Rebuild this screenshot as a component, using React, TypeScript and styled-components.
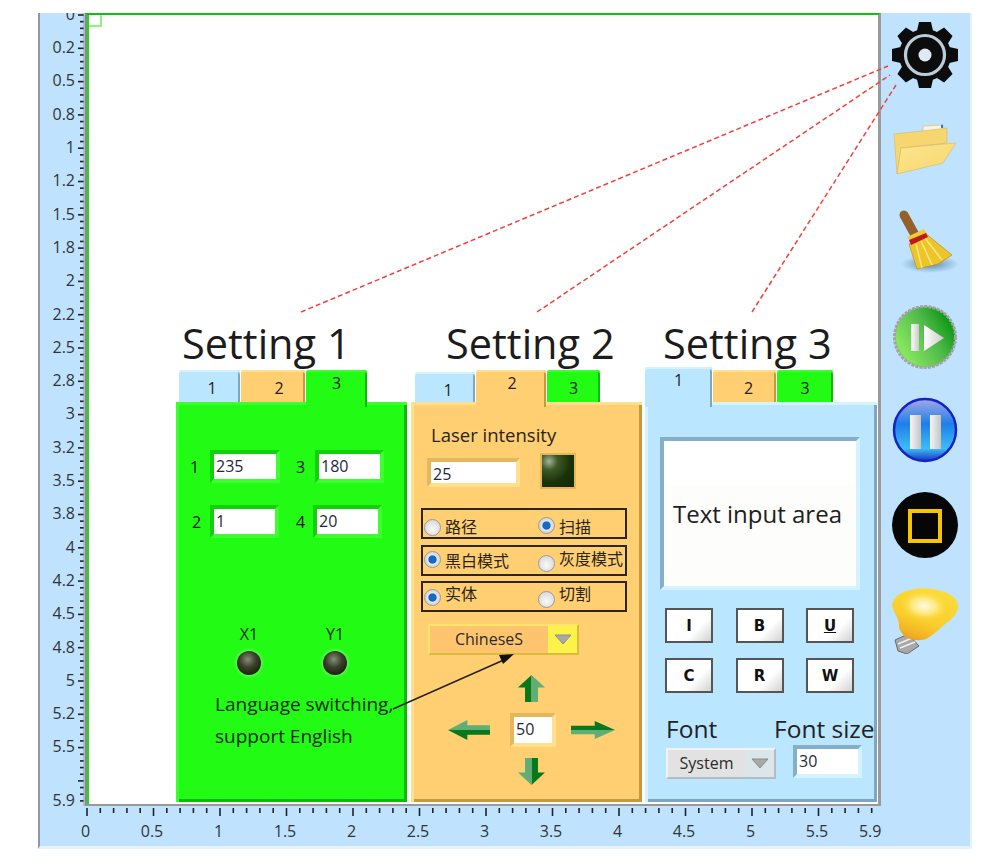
import React from "react";
import styled, { createGlobalStyle } from "styled-components";

type Tone = "green" | "orange" | "blue";

const tones: Record<Tone, { face: string; light: string; dark: string; well: string }> = {
  green: { face: "#22fb14", light: "#3dff30", dark: "#10b80a", well: "#13d00c" },
  orange: { face: "#ffcf72", light: "#ffe08e", dark: "#c6993e", well: "#e4b65e" },
  blue: { face: "#bbe6ff", light: "#d4f3ff", dark: "#7ea6bf", well: "#84aec9" },
};

const GlobalStyle = createGlobalStyle`
  html, body {
    margin: 0;
    background: #fff;
  }
  * {
    box-sizing: border-box;
  }
`;

const Page = styled.div`
  position: relative;
  width: 1000px;
  height: 868px;
  padding: 13px 0 0 38px;
  font-family: "Open Sans", "Noto Sans CJK SC", sans-serif;
  color: #222;
  overflow: hidden;
`;

const Overlay = styled.svg`
  position: absolute;
  top: 0;
  left: 0;
  pointer-events: none;
`;

const Window = styled.div`
  display: flex;
  width: 934px;
  height: 836px;
  background: #bfe3ff;
  border-left: 2px solid #8d9aa5;
  border-right: 2px solid #e6f3fc;
  border-bottom: 3px solid #e6f3fc;
`;

const Main = styled.div`
  display: flex;
  flex-direction: column;
  width: 841px;
`;

const TopRow = styled.div`
  display: flex;
  height: 793px;
`;

const RulerY = styled.div`
  display: flex;
  width: 45px;
  clip-path: inset(0 0 -30px 0);
`;

const LabelsY = styled.div`
  flex: 1;
  display: flex;
  flex-direction: column;
  margin-top: -15.15px;
  padding-right: 2px;
`;

const TickLabelY = styled.div<{ $extra?: number }>`
  flex: 0 0 33.3px;
  margin-top: ${p => p.$extra ?? 0}px;
  font-size: 16px;
  line-height: 33.3px;
  text-align: right;
  color: #333;
`;

const RulerX = styled.div`
  display: flex;
  flex-direction: column;
  padding-top: 2px;
`;

const LabelsX = styled.div`
  display: flex;
  margin-left: 12.25px;
`;

const TickLabelX = styled.div<{ $extra?: number }>`
  flex: 0 0 66.5px;
  margin-left: ${p => p.$extra ?? 0}px;
  font-size: 16px;
  line-height: 26px;
  text-align: center;
  color: #333;
`;

const Canvas = styled.div`
  position: relative;
  flex: 1;
  display: flex;
  align-items: flex-end;
  padding: 0 0 2px 85px;
  background: #fff;
  border-left: 2px solid #8a8a8a;
  border-right: 3px solid #9a9a9a;
  border-bottom: 2px solid #9a9a9a;
  border-top: 2px solid #12c012;
  box-shadow: inset 2px 0 0 #22d81a;
`;

const CornerMark = styled.div`
  position: absolute;
  top: 0;
  left: 2px;
  width: 13px;
  height: 12px;
  border-right: 2px solid #8cf57e;
  border-bottom: 2px solid #8cf57e;
`;

const Panel = styled.section<{ $width: number; $gap: number }>`
  display: flex;
  flex-direction: column;
  width: ${p => p.$width}px;
  margin-left: ${p => p.$gap}px;
`;

const Heading = styled.h2<{ $indent: number }>`
  height: 45px;
  margin: 0 0 3px;
  padding-left: ${p => p.$indent}px;
  font-size: 41.5px;
  font-weight: 400;
  line-height: 42px;
  color: #1c1c1c;
  white-space: nowrap;
`;

const Tabs = styled.div<{ $indent: number }>`
  display: flex;
  align-items: flex-end;
  gap: 1px;
  height: 32px;
  padding-left: ${p => p.$indent}px;
`;

const Tab = styled.div<{ $tone: Tone; $w: number; $h: number; $active?: boolean; $shift?: number }>`
  position: relative;
  z-index: ${p => (p.$active ? 1 : 0)};
  flex: 0 0 ${p => p.$w}px;
  height: ${p => p.$h}px;
  margin-bottom: ${p => (p.$active ? -5 : 0)}px;
  padding: ${p => (p.$active ? 2 : 7)}px 0 0 ${p => p.$shift ?? 0}px;
  font-size: 16px;
  line-height: 22px;
  text-align: center;
  background: ${p => tones[p.$tone].face};
  border-radius: 3px 3px 0 0;
  box-shadow:
    inset 0 2px 0 ${p => tones[p.$tone].light},
    inset -2px 0 0 ${p => tones[p.$tone].dark};
`;

const Body = styled.div<{ $tone: Tone }>`
  display: flex;
  flex-direction: column;
  height: 400px;
  background: ${p => tones[p.$tone].face};
  box-shadow:
    inset 3px 3px 0 ${p => tones[p.$tone].light},
    inset -3px -3px 0 ${p => tones[p.$tone].dark};
`;

const Well = styled.div<{ $tone: Tone; $w: number; $h: number }>`
  display: flex;
  flex: 0 0 ${p => p.$w}px;
  width: ${p => p.$w}px;
  height: ${p => p.$h}px;
  background: #fff;
  border: 4px solid;
  border-color: ${p => `${tones[p.$tone].well} ${tones[p.$tone].light} ${tones[p.$tone].light} ${tones[p.$tone].well}`};
`;

const WellText = styled.span`
  padding-left: 2px;
  font-size: 16px;
  line-height: 24px;
  color: #1e2a3a;
`;

const FieldRow = styled.div<{ $top: number; $left: number }>`
  display: flex;
  align-items: center;
  margin-top: ${p => p.$top}px;
  padding-left: ${p => p.$left}px;
`;

const FieldLabel = styled.span<{ $w: number; $before?: number }>`
  flex: 0 0 ${p => p.$w}px;
  margin-left: ${p => p.$before ?? 0}px;
  font-size: 16px;
  color: #111;
`;

const LedRow = styled.div`
  display: flex;
  margin: 85px 0 0 30px;
`;

const LedColumn = styled.div`
  display: flex;
  flex-direction: column;
  align-items: center;
  width: 86px;
  font-size: 16px;
  line-height: 22px;
  color: #0b2a0b;
`;

const RoundLed = styled.div`
  width: 24px;
  height: 24px;
  margin-top: 6px;
  border-radius: 50%;
  background: radial-gradient(circle at 45% 35%, #878d78 0, #3a4029 40%, #1e2312 75%);
  box-shadow: 0 0 3px 1px #7df07a;
`;

const Note = styled.p`
  margin: 13px 0 0 39px;
  font-size: 19px;
  line-height: 32px;
  color: #0b2a0b;
  white-space: nowrap;
`;

const LaserLabel = styled.div`
  margin: 21px 0 0 20px;
  font-size: 18.5px;
  line-height: 24px;
  color: #2b2416;
`;

const LaserRow = styled.div`
  display: flex;
  height: 29px;
  margin: 11px 0 0 16px;
`;

const SquareLed = styled.div`
  width: 36px;
  height: 36px;
  margin: -5px 0 0 20px;
  background: radial-gradient(circle at 22% 20%, #a9b29a 0, #3e5a26 24%, #183208 60%, #112607 100%);
  border: 2px solid #e4b65e;
`;

const RadioGroup = styled.div<{ $top: number }>`
  display: grid;
  grid-template-columns: 114px 1fr;
  width: 206px;
  height: 31px;
  margin: ${p => p.$top}px 0 0 10px;
  padding-left: 1px;
  border: 2px solid #2c2618;
`;

const RadioItem = styled.label`
  display: flex;
  align-items: flex-start;
  gap: 4px;
  font-size: 16px;
  line-height: 20px;
  color: #2a2415;
  white-space: nowrap;
`;

const RadioDot = styled.span<{ $on?: boolean; $dy: number }>`
  flex: 0 0 17px;
  height: 17px;
  margin-top: ${p => p.$dy}px;
  border-radius: 50%;
  border: 1px solid #9a9a9a;
  background: ${p =>
    p.$on
      ? "radial-gradient(circle, #1668c8 0, #1668c8 34%, #e8e8e8 44%, #bdbdbd 100%)"
      : "radial-gradient(circle at 50% 60%, #fafafa 0, #cfcfcf 100%)"};
`;

const RadioText = styled.span<{ $dy: number }>`
  margin-top: ${p => p.$dy}px;
`;

const Dropdown = styled.div<{ $w: number; $face: string; $button: string; $edge: string; $shade: string }>`
  display: flex;
  width: ${p => p.$w}px;
  height: 31px;
  background: ${p => p.$face};
  border: 2px solid;
  border-color: ${p => `${p.$edge} ${p.$shade} ${p.$shade} ${p.$edge}`};
  span:first-child {
    flex: 1;
    font-size: 16px;
    line-height: 27px;
    text-align: center;
    color: #2b2b2b;
  }
  span:last-child {
    display: flex;
    align-items: center;
    justify-content: center;
    flex: 0 0 29px;
    background: ${p => p.$button};
  }
`;

const DropdownSlot = styled.div<{ $top: number; $left: number }>`
  flex: none;
  margin: ${p => p.$top}px 0 0 ${p => p.$left}px;
`;

const Pad = styled.div`
  display: grid;
  grid-template-columns: 62px 46px 59px;
  grid-template-rows: 27px 34px 27px;
  row-gap: 11px;
  justify-items: center;
  align-items: center;
  margin: 20px 0 0 37px;
`;

const PadCell = styled.div<{ $col: number; $row: number; $align?: string; $nudge?: number }>`
  grid-column: ${p => p.$col};
  grid-row: ${p => p.$row};
  justify-self: ${p => p.$align ?? "center"};
  margin-right: ${p => p.$nudge ?? 0}px;
  display: flex;
`;

const TextAreaWell = styled.div`
  display: flex;
  align-items: center;
  height: 153px;
  width: 200px;
  margin: 35px 0 0 15px;
  padding: 0 0 0 9px;
  background: linear-gradient(#fff 0, #fff 30%, #fdfdfb 31%, #fdfdfb 100%);
  border: 4px solid;
  border-color: #84aec9 #d4f3ff #d4f3ff #84aec9;
  font-size: 24px;
  color: #202020;
  white-space: nowrap;
`;

const ButtonGrid = styled.div`
  display: grid;
  grid-template-columns: repeat(3, 48px);
  grid-template-rows: 35px 35px;
  column-gap: 22.5px;
  row-gap: 15px;
  margin: 18px 0 0 20px;
`;

const StyleButton = styled.button<{ $underline?: boolean }>`
  padding: 0;
  font-family: "DejaVu Sans", sans-serif;
  font-size: 15px;
  font-weight: 700;
  color: #111;
  text-decoration: ${p => (p.$underline ? "underline" : "none")};
  background: linear-gradient(135deg, #fff 0, #fff 65%, #d2d2d2 100%);
  border: 2px solid #555;
  border-radius: 0;
`;

const FontLabels = styled.div`
  display: flex;
  margin: 20px 0 0 21px;
  font-size: 24.5px;
  line-height: 32px;
  color: #222;
  white-space: nowrap;
  span:first-child {
    flex: 0 0 108px;
  }
`;

const FontControls = styled.div`
  display: flex;
  align-items: flex-start;
  gap: 17px;
  padding-left: 21px;
`;

const Sidebar = styled.aside`
  display: flex;
  flex-direction: column;
  align-items: center;
  flex: 1;
  padding: 9px 1px 0 0;
`;

const IconSlot = styled.div<{ $gap: number }>`
  display: flex;
  width: 66px;
  height: 66px;
  margin-top: ${p => p.$gap}px;
`;

const Triangle = () => (
  <svg width="18" height="11" viewBox="0 0 18 11">
    <polygon points="1,1 17,1 9,10" fill="#a8a8a8" stroke="#8e8e8e" />
  </svg>
);

// one arrow drawn along its axis, half dark and half light
const Arrow = ({ dir, len, wide }: { dir: "up" | "down" | "left" | "right"; len: number; wide: number }) => {
  const head = len * 0.46;
  const shaft = wide * 0.24;
  const mid = wide / 2;
  const at = (side: number, along: number) => {
    if (dir === "up") return `${mid + side},${along}`;
    if (dir === "down") return `${mid - side},${len - along}`;
    if (dir === "left") return `${along},${mid - side}`;
    return `${len - along},${mid + side}`;
  };
  const half = (s: number) =>
    [at(0, 0), at(s * mid, head), at(s * shaft, head), at(s * shaft, len), at(0, len)].join(" ");
  const horizontal = dir === "left" || dir === "right";
  return (
    <svg width={horizontal ? len : wide} height={horizontal ? wide : len}>
      <polygon points={half(-1)} fill="#07781c" />
      <polygon points={half(1)} fill="#5fae78" />
    </svg>
  );
};

const GearIcon = () => (
  <svg width="66" height="66" viewBox="0 0 66 66">
    {[0, 45, 90, 135, 180, 225, 270, 315].map(a => (
      <polygon key={a} points="27,0 39,0 42,13 24,13" fill="#0c0c0c" transform={`rotate(${a} 33 33)`} />
    ))}
    <circle cx="33" cy="33" r="26" fill="#0c0c0c" />
    <circle cx="33" cy="33" r="19.5" fill="none" stroke="#bccdd9" strokeWidth="3.2" />
    <circle cx="33" cy="33" r="6.5" fill="#dfe9f1" />
  </svg>
);

const FolderIcon = () => (
  <svg width="66" height="66" viewBox="0 0 66 66">
    <defs>
      <linearGradient id="folderFront" x1="0" y1="0" x2="1" y2="1">
        <stop offset="0" stopColor="#fde68f" />
        <stop offset="1" stopColor="#f7d56c" />
      </linearGradient>
    </defs>
    <polygon points="31,9 51,8 52,18 31,20" fill="#f7f4e4" stroke="#dcb858" strokeWidth="0.6" />
    <polygon points="49,8 51,7.5 51,11 49,11" fill="#2b7fc4" />
    <polygon points="2,17 30,14 55,11 55,26 9,31 5,57" fill="#f6d671" stroke="#d6b04e" strokeWidth="0.5" />
    <polygon points="9,31 64,26 51,46 5,57" fill="url(#folderFront)" stroke="#d6b04e" strokeWidth="0.5" />
  </svg>
);

const BroomIcon = () => (
  <svg width="66" height="66" viewBox="0 0 66 66">
    <defs>
      <radialGradient id="broomShadow">
        <stop offset="0" stopColor="#5f8aa8" />
        <stop offset="1" stopColor="#bfe3ff" />
      </radialGradient>
    </defs>
    <ellipse cx="38" cy="56" rx="29" ry="9" fill="url(#broomShadow)" />
    <line x1="12" y1="7" x2="23" y2="27" stroke="#95602a" strokeWidth="9" strokeLinecap="round" />
    <polygon points="17,36 33,25 60,47 46,56 25,61" fill="#ecc52c" stroke="#b8921a" strokeWidth="0.7" />
    <path d="M24 36 L30 60 M29 33 L40 57 M33 30 L50 52" stroke="#fbe67a" strokeWidth="1.5" fill="none" />
    <polygon points="15,29 32,21 35,26 18,33" fill="#efcb3a" />
    <polygon points="17,32 34,25 36,29 19,37" fill="#c01818" />
  </svg>
);

const PlayIcon = () => (
  <svg width="66" height="66" viewBox="0 0 66 66">
    <defs>
      <linearGradient id="playFill" x1="0.05" y1="0.55" x2="0.8" y2="0.1">
        <stop offset="0" stopColor="#84e65e" />
        <stop offset="0.6" stopColor="#4fb84a" />
        <stop offset="1" stopColor="#0f9a16" />
      </linearGradient>
      <linearGradient id="playBar" x1="0" y1="0" x2="1" y2="0">
        <stop offset="0" stopColor="#ffffff" />
        <stop offset="1" stopColor="#c9c9c9" />
      </linearGradient>
    </defs>
    <circle cx="33" cy="33" r="30.5" fill="url(#playFill)" stroke="#a3a3a3" strokeWidth="3" strokeDasharray="3 1.2" />
    <rect x="19" y="20" width="8" height="27" fill="url(#playBar)" />
    <polygon points="32,21 52,34 32,47" fill="url(#playBar)" />
  </svg>
);

const PauseIcon = () => (
  <svg width="66" height="66" viewBox="0 0 66 66">
    <defs>
      <linearGradient id="pauseFill" x1="0" y1="0" x2="0" y2="1">
        <stop offset="0" stopColor="#a4a8e6" />
        <stop offset="0.4" stopColor="#1f7ee8" />
        <stop offset="0.8" stopColor="#3cbdf6" />
        <stop offset="1" stopColor="#1830c0" />
      </linearGradient>
      <linearGradient id="pauseBar" x1="0" y1="0" x2="1" y2="0">
        <stop offset="0" stopColor="#f6f6f6" />
        <stop offset="1" stopColor="#c4c4c4" />
      </linearGradient>
    </defs>
    <circle cx="33" cy="33" r="31" fill="url(#pauseFill)" stroke="#1424c4" strokeWidth="2.5" />
    <rect x="18" y="18" width="11" height="34" fill="url(#pauseBar)" />
    <rect x="38" y="18" width="11" height="34" fill="url(#pauseBar)" />
  </svg>
);

const StopIcon = () => (
  <svg width="66" height="66" viewBox="0 0 66 66">
    <circle cx="33" cy="33" r="33" fill="#060606" />
    <rect x="18" y="19" width="30" height="30" fill="none" stroke="#f6c400" strokeWidth="4" />
  </svg>
);

const BulbIcon = () => (
  <svg width="66" height="66" viewBox="0 0 66 66">
    <defs>
      <linearGradient id="bulbFill" x1="0.7" y1="0" x2="0.25" y2="1">
        <stop offset="0" stopColor="#fbdc3a" />
        <stop offset="0.6" stopColor="#f9cf2c" />
        <stop offset="0.85" stopColor="#f4b524" />
        <stop offset="1" stopColor="#ea9a1e" />
      </linearGradient>
      <radialGradient id="bulbGlow">
        <stop offset="0" stopColor="#fffbe6" />
        <stop offset="0.5" stopColor="#fdf09c" stopOpacity="0.8" />
        <stop offset="1" stopColor="#fbdc3a" stopOpacity="0" />
      </radialGradient>
    </defs>
    <polygon points="3,52 16,46 27,58 15,66 6,63" fill="#a8a8a8" stroke="#555" strokeWidth="0.8" />
    <path d="M6 56 L20 50 M8 60 L23 54" stroke="#efefef" strokeWidth="1.6" />
    <path
      d="M0 17 C1 9 9 4 18 2 C28 -1 42 0 53 4 C62 8 66 12 66 18 C66 26 60 31 52 37 C46 42 41 47 36 50 C30 53 22 53 16 50 C11 48 9 44 7 40 C8 30 1 25 0 17 Z"
      fill="url(#bulbFill)"
    />
    <ellipse cx="32" cy="18" rx="24" ry="15" fill="url(#bulbGlow)" transform="rotate(6 32 18)" />
  </svg>
);

const yLabels = [
  "0", "0.2", "0.5", "0.8", "1", "1.2", "1.5", "1.8", "2", "2.2", "2.5", "2.8",
  "3", "3.2", "3.5", "3.8", "4", "4.2", "4.5", "4.8", "5", "5.2", "5.5",
];
const xLabels = ["0", "0.5", "1", "1.5", "2", "2.5", "3", "3.5", "4", "4.5", "5", "5.5"];
const ticks = Array.from({ length: 119 }, (_, i) => i);
const xTicks = Array.from({ length: 60 }, (_, i) => i);

const App = () => {
  return (
    <Page>
      <GlobalStyle />
      <Window>
        <Main>
          <TopRow>
            <RulerY>
              <LabelsY>
                {yLabels.map(t => (
                  <TickLabelY key={t}>{t}</TickLabelY>
                ))}
                <TickLabelY $extra={20}>5.9</TickLabelY>
              </LabelsY>
              <svg width="8" height="793">
                {ticks.map(i => (
                  <line
                    key={i}
                    x1={i % 5 === 0 ? 1 : 3}
                    x2="7"
                    y1={2 + i * 6.66}
                    y2={2 + i * 6.66}
                    stroke="#222"
                    strokeWidth="1.6"
                  />
                ))}
                <line x1="7" x2="7" y1="0" y2="793" stroke="#9a9a9a" strokeWidth="1" />
              </svg>
            </RulerY>
            <Canvas>
              <CornerMark />
              <Panel $width={231} $gap={4}>
                <Heading $indent={6}>Setting 1</Heading>
                <Tabs $indent={3}>
                  <Tab $tone="blue" $w={61} $h={32} $shift={5}>1</Tab>
                  <Tab $tone="orange" $w={64} $h={32} $shift={12}>2</Tab>
                  <Tab $tone="green" $w={61} $h={37} $active>3</Tab>
                </Tabs>
                <Body $tone="green">
                  <FieldRow $top={48} $left={14}>
                    <FieldLabel $w={20}>1</FieldLabel>
                    <Well $tone="green" $w={70} $h={33}><WellText>235</WellText></Well>
                    <FieldLabel $w={19} $before={16}>3</FieldLabel>
                    <Well $tone="green" $w={69} $h={33}><WellText>180</WellText></Well>
                  </FieldRow>
                  <FieldRow $top={22} $left={16}>
                    <FieldLabel $w={18}>2</FieldLabel>
                    <Well $tone="green" $w={69} $h={33}><WellText>1</WellText></Well>
                    <FieldLabel $w={17} $before={17}>4</FieldLabel>
                    <Well $tone="green" $w={69} $h={33}><WellText>20</WellText></Well>
                  </FieldRow>
                  <LedRow>
                    <LedColumn>X1<RoundLed /></LedColumn>
                    <LedColumn>Y1<RoundLed /></LedColumn>
                  </LedRow>
                  <Note>
                    Language switching,
                    <br />
                    support English
                  </Note>
                </Body>
              </Panel>

              <Panel $width={231} $gap={4}>
                <Heading $indent={35}>Setting 2</Heading>
                <Tabs $indent={4}>
                  <Tab $tone="blue" $w={60} $h={30} $shift={6}>1</Tab>
                  <Tab $tone="orange" $w={70} $h={37} $active $shift={2}>2</Tab>
                  <Tab $tone="green" $w={53} $h={32}>3</Tab>
                </Tabs>
                <Body $tone="orange">
                  <LaserLabel>Laser intensity</LaserLabel>
                  <LaserRow>
                    <Well $tone="orange" $w={93} $h={29}><WellText>25</WellText></Well>
                    <SquareLed />
                  </LaserRow>
                  <RadioGroup $top={21}>
                    <RadioItem><RadioDot $dy={8.5} /><RadioText $dy={7}>路径</RadioText></RadioItem>
                    <RadioItem><RadioDot $on $dy={6.5} /><RadioText $dy={7}>扫描</RadioText></RadioItem>
                  </RadioGroup>
                  <RadioGroup $top={6}>
                    <RadioItem><RadioDot $on $dy={3.5} /><RadioText $dy={4}>黑白模式</RadioText></RadioItem>
                    <RadioItem><RadioDot $dy={7.5} /><RadioText $dy={2}>灰度模式</RadioText></RadioItem>
                  </RadioGroup>
                  <RadioGroup $top={5}>
                    <RadioItem><RadioDot $on $dy={5.5} /><RadioText $dy={1}>实体</RadioText></RadioItem>
                    <RadioItem><RadioDot $dy={7.5} /><RadioText $dy={1}>切割</RadioText></RadioItem>
                  </RadioGroup>
                  <DropdownSlot $top={12} $left={17}>
                    <Dropdown $w={151} $face="#ffc56e" $button="#fdf24a" $edge="#ffe66a" $shade="#d8bc3c">
                      <span>ChineseS</span>
                      <span><Triangle /></span>
                    </Dropdown>
                  </DropdownSlot>
                  <Pad>
                    <PadCell $col={2} $row={1} $nudge={4}><Arrow dir="up" len={27} wide={27} /></PadCell>
                    <PadCell $col={1} $row={2} $align="start"><Arrow dir="left" len={42} wide={20} /></PadCell>
                    <PadCell $col={2} $row={2}>
                      <Well $tone="orange" $w={46} $h={34}><WellText>50</WellText></Well>
                    </PadCell>
                    <PadCell $col={3} $row={2} $align="end"><Arrow dir="right" len={44} wide={18} /></PadCell>
                    <PadCell $col={2} $row={3} $nudge={4}><Arrow dir="down" len={27} wide={27} /></PadCell>
                  </Pad>
                </Body>
              </Panel>

              <Panel $width={232} $gap={3}>
                <Heading $indent={18}>Setting 3</Heading>
                <Tabs $indent={0}>
                  <Tab $tone="blue" $w={67} $h={40} $active>1</Tab>
                  <Tab $tone="orange" $w={63} $h={32} $shift={8}>2</Tab>
                  <Tab $tone="green" $w={56} $h={32}>3</Tab>
                </Tabs>
                <Body $tone="blue">
                  <TextAreaWell>Text input area</TextAreaWell>
                  <ButtonGrid>
                    <StyleButton>I</StyleButton>
                    <StyleButton>B</StyleButton>
                    <StyleButton $underline>U</StyleButton>
                    <StyleButton>C</StyleButton>
                    <StyleButton>R</StyleButton>
                    <StyleButton>W</StyleButton>
                  </ButtonGrid>
                  <FontLabels>
                    <span>Font</span>
                    <span>Font size</span>
                  </FontLabels>
                  <FontControls>
                    <DropdownSlot $top={3} $left={0}>
                      <Dropdown $w={110} $face="#e2e2e2" $button="#dbe6ea" $edge="#f2f2f2" $shade="#b4bcc1">
                        <span>System</span>
                        <span><Triangle /></span>
                      </Dropdown>
                    </DropdownSlot>
                    <Well $tone="blue" $w={69} $h={33}><WellText>30</WellText></Well>
                  </FontControls>
                </Body>
              </Panel>
            </Canvas>
          </TopRow>
          <RulerX>
            <svg width="841" height="10">
              {xTicks.map(i => (
                <line
                  key={i}
                  x1={47 + i * 13.3}
                  x2={47 + i * 13.3}
                  y1="0"
                  y2={i % 5 === 0 ? 8 : 5}
                  stroke="#222"
                  strokeWidth="1.6"
                />
              ))}
            </svg>
            <LabelsX>
              {xLabels.map(t => (
                <TickLabelX key={t}>{t}</TickLabelX>
              ))}
              <TickLabelX $extra={-13.3}>5.9</TickLabelX>
            </LabelsX>
          </RulerX>
        </Main>
        <Sidebar>
          <IconSlot $gap={0}><GearIcon /></IconSlot>
          <IconSlot $gap={29}><FolderIcon /></IconSlot>
          <IconSlot $gap={25}><BroomIcon /></IconSlot>
          <IconSlot $gap={30}><PlayIcon /></IconSlot>
          <IconSlot $gap={27}><PauseIcon /></IconSlot>
          <IconSlot $gap={29}><StopIcon /></IconSlot>
          <IconSlot $gap={30}><BulbIcon /></IconSlot>
        </Sidebar>
      </Window>
      <Overlay width="1000" height="868">
        <g stroke="#f0403c" strokeWidth="1.5" strokeDasharray="5 3">
          <line x1="301" y1="312" x2="888" y2="66" />
          <line x1="537" y1="312" x2="890" y2="75" />
          <line x1="752" y1="312" x2="896" y2="85" />
        </g>
        <line x1="393" y1="709" x2="506" y2="659" stroke="#222" strokeWidth="1.4" />
        <polygon points="514,654 499,655 503,664" fill="#111" />
      </Overlay>
    </Page>
  );
};

export default App;
